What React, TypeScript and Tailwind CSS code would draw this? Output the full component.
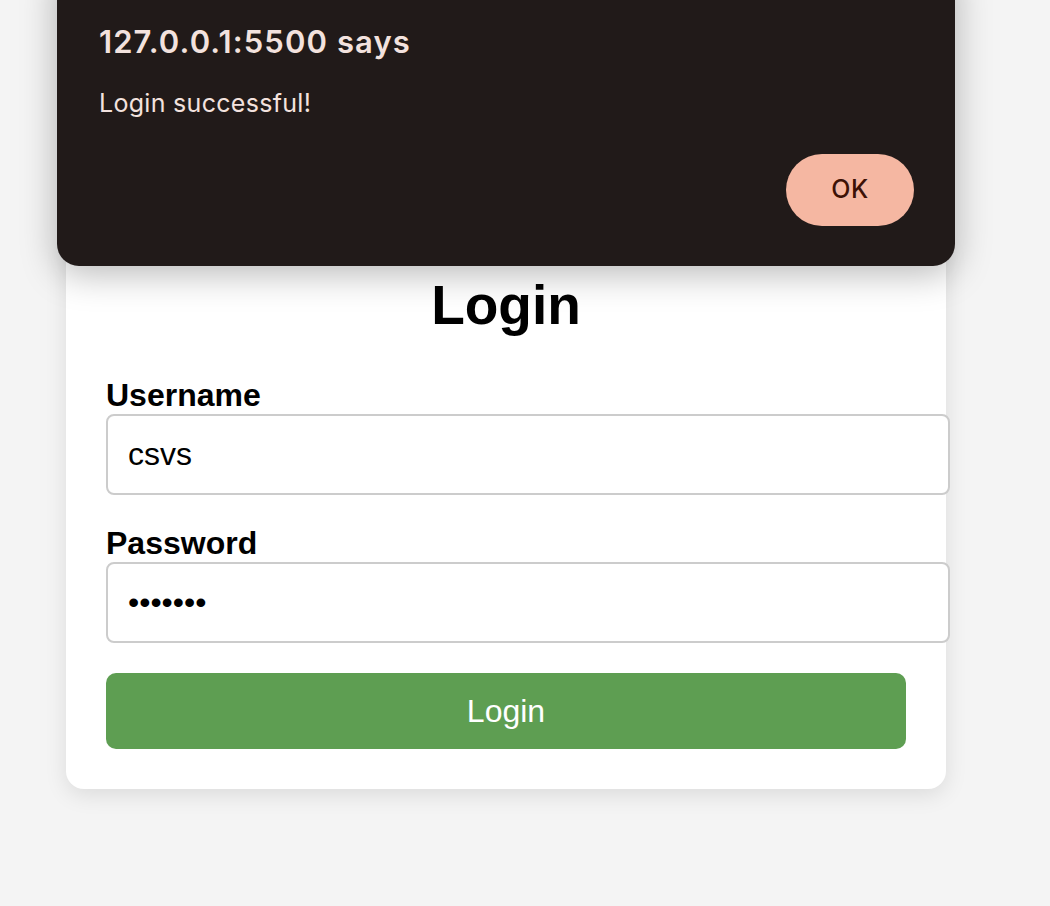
import React from "react";

function AlertDialog() {
  return (
    <div
      className="absolute left-[57px] top-[-40px] h-[306px] w-[898px] rounded-[22px] bg-[#211a19] pl-[42px] pr-[41px] pt-[65px] shadow-[0_8px_36px_rgba(0,0,0,0.28)]"
      style={{ fontFamily: "Inter, 'Noto Sans', sans-serif" }}
    >
      <p className="text-[31px] font-semibold leading-[34px] tracking-[1.1px] text-[#f3e2de]">127.0.0.1:5500 says</p>
      <p className="mt-[29px] text-[25px] leading-[30px] tracking-[0.3px] text-[#f3e2de]">Login successful!</p>
      <div className="mt-[36px] flex justify-end">
        <button className="h-[72px] w-[128px] rounded-full bg-[#f5b7a2] text-[25px] font-medium tracking-[0.5px] text-[#3c1106]">
          OK
        </button>
      </div>
    </div>
  );
}

export default function App() {
  return (
    <div
      className="relative min-h-[906px] overflow-hidden bg-[#f4f4f4] pl-[66px] pt-[233px]"
      style={{ fontFamily: "'Liberation Sans', Arial, sans-serif" }}
    >
      <div className="w-[880px] rounded-[18px] bg-white p-[40px] shadow-[0_6px_22px_rgba(0,0,0,0.1)]">
        <h1 className="mb-[40px] text-center text-[55px] font-bold leading-[64px] text-black">Login</h1>
        <form className="flex flex-col">
          <div className="mb-[30px]">
            <label className="block text-[32px] font-bold leading-[37px] text-black">Username</label>
            <input
              readOnly
              defaultValue="csvs"
              className="box-content w-full rounded-[8px] border-2 border-[#cccccc] bg-white px-[20px] py-[20px] text-[32px] leading-[37px] text-black outline-none"
            />
          </div>
          <div className="mb-[30px]">
            <label className="block text-[32px] font-bold leading-[37px] text-black">Password</label>
            <input
              readOnly
              type="password"
              defaultValue="1234567"
              className="box-content w-full rounded-[8px] border-2 border-[#cccccc] bg-white px-[20px] py-[20px] text-[32px] leading-[37px] text-black outline-none"
            />
          </div>
          <button
            type="button"
            className="h-[76px] w-full rounded-[10px] bg-[#5e9e52] text-[32px] leading-[37px] text-white"
          >
            Login
          </button>
        </form>
      </div>
      <AlertDialog />
    </div>
  );
}
